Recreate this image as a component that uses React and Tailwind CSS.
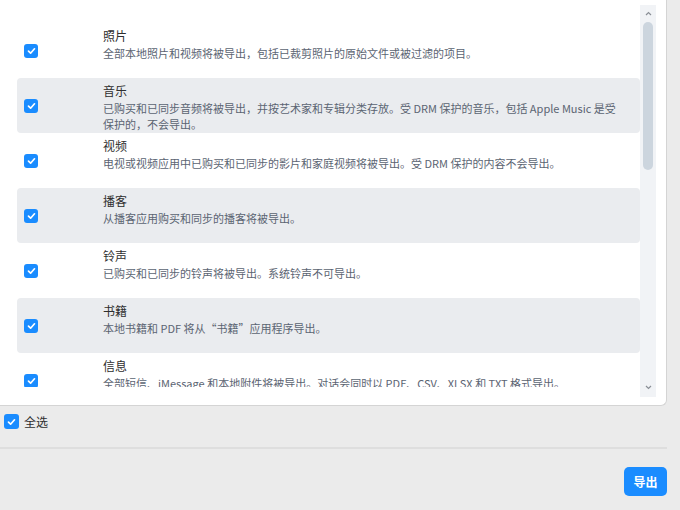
import React from "react";

const items = [
  { title: "照片", desc: "全部本地照片和视频将被导出，包括已裁剪照片的原始文件或被过滤的项目。" },
  { title: "音乐", desc: "已购买和已同步音频将被导出，并按艺术家和专辑分类存放。受 DRM 保护的音乐，包括 Apple Music 是受保护的，不会导出。" },
  { title: "视频", desc: "电视或视频应用中已购买和已同步的影片和家庭视频将被导出。受 DRM 保护的内容不会导出。" },
  { title: "播客", desc: "从播客应用购买和同步的播客将被导出。" },
  { title: "铃声", desc: "已购买和已同步的铃声将被导出。系统铃声不可导出。" },
  { title: "书籍", desc: "本地书籍和 PDF 将从“书籍”应用程序导出。" },
  { title: "信息", desc: "全部短信、iMessage 和本地附件将被导出。对话会同时以 PDF、CSV、XLSX 和 TXT 格式导出。" },
];

const Check = ({ size = "w-[14px] h-[14px]" }) => (
  <span className={`${size} rounded-[3px] bg-[#1a8cff] flex items-center justify-center shrink-0`}>
    <svg width="9" height="8" viewBox="0 0 9 8" fill="none">
      <polyline points="1.5,4.2 3.6,6.2 7.5,1.8" stroke="white" strokeWidth="1.7" strokeLinecap="round" strokeLinejoin="round" />
    </svg>
  </span>
);

export default function App() {
  return (
    <div
      className="w-[680px] h-[510px] bg-[#ebebeb] flex flex-col overflow-hidden"
      style={{ fontFamily: '"Noto Sans CJK SC", "Noto Sans", sans-serif' }}
    >
      {/* list panel */}
      <div className="w-[667px] h-[406px] shrink-0 bg-white border-r border-b border-[#d4d4d4] rounded-br-[6px] flex">
        <div className="flex-1 pt-[23px] pl-[17px]">
          <div className="h-[364px] overflow-hidden">
            {items.map((it, i) => (
              <div
                key={it.title}
                className={`h-[55px] flex items-start pl-[7px] pr-[14px] rounded-[4px] ${i % 2 === 1 ? "bg-[#eaecef]" : ""}`}
              >
                <div className="self-center">
                  <Check />
                </div>
                <div className="ml-[65px] pt-[4px] flex-1">
                  <div className="text-[12px] leading-[18px] text-[#2e2e2e]">{it.title}</div>
                  <div className="text-[11px] leading-[16px] text-[#5b6472]">{it.desc}</div>
                </div>
              </div>
            ))}
          </div>
        </div>
        {/* scrollbar */}
        <div className="w-[26px] pt-[5px]">
          <div className="w-[16px] h-[392px] bg-[#f1f3f6] flex flex-col items-center">
            <svg width="7" height="5" viewBox="0 0 7 5" className="mt-[6px]">
              <polyline points="1,4 3.5,1.5 6,4" stroke="#8a8f96" strokeWidth="1.2" fill="none" />
            </svg>
            <div className="w-[10px] h-[148px] mt-[6px] rounded-full bg-[#ccd5de]" />
            <div className="flex-1" />
            <svg width="7" height="5" viewBox="0 0 7 5" className="mb-[7px]">
              <polyline points="1,1 3.5,3.5 6,1" stroke="#8a8f96" strokeWidth="1.2" fill="none" />
            </svg>
          </div>
        </div>
      </div>

      {/* select all */}
      <div className="h-[15px] flex items-center gap-[5px] pl-[4px] mt-[8px]">
        <Check size="w-[15px] h-[15px]" />
        <span className="text-[12px] leading-[15px] text-[#2e2e2e]">全选</span>
      </div>

      <div className="w-[667px] h-[2px] bg-[#dedede] mt-[18px]" />

      <div className="w-[667px] flex justify-end mt-[18px]">
        <button className="w-[43px] h-[29px] rounded-[5px] bg-[#1a8cff] text-white text-[12px] font-bold">
          导出
        </button>
      </div>
    </div>
  );
}
